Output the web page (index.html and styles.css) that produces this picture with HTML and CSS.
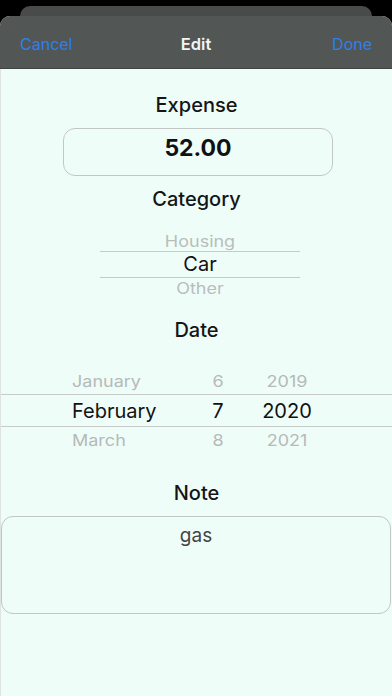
FILE: index.html
```html
<!DOCTYPE html>
<html>
<head>
<meta charset="utf-8">
<link rel="stylesheet" href="styles.css">
</head>
<body>
<div class="screen">
  <div class="back-card"></div>
  <div class="sheet">
    <div class="navbar">
      <span class="nav-btn">Cancel</span>
      <span class="nav-title">Edit</span>
      <span class="nav-btn">Done</span>
    </div>
    <div class="content">
      <div class="label label-expense">Expense</div>
      <div class="amount-box">52.00</div>
      <div class="label label-category">Category</div>
      <div class="cat-picker">
        <div class="row faded">Housing</div>
        <div class="row selected">Car</div>
        <div class="row faded">Other</div>
      </div>
      <div class="label label-date">Date</div>
      <div class="date-picker">
        <div class="drow faded"><span>January</span><span>6</span><span>2019</span></div>
        <div class="drow selected"><span>February</span><span>7</span><span>2020</span></div>
        <div class="drow faded"><span>March</span><span>8</span><span>2021</span></div>
      </div>
      <div class="label label-note">Note</div>
      <div class="note-box">gas</div>
    </div>
  </div>
</div>
</body>
</html>
```
FILE: styles.css
```css
html, body {
  margin: 0;
  padding: 0;
  background: #000;
}
body {
  font-family: Inter, "Noto Sans", "Liberation Sans", sans-serif;
}
.screen {
  width: 392px;
  height: 696px;
  overflow: hidden;
  display: flex;
  flex-direction: column;
}
.back-card {
  height: 10px;
  margin: 6px 20px 0;
  background: #484b4a;
  border-radius: 10px 10px 0 0;
  flex: none;
}
.sheet {
  flex: 1;
  display: flex;
  flex-direction: column;
  border-radius: 10px 10px 0 0;
  overflow: hidden;
  background: #effdf8;
}
.navbar {
  height: 53px;
  flex: none;
  background: #525755;
  border-bottom: 1px solid #3f4342;
  display: flex;
  align-items: center;
  justify-content: space-between;
  padding: 3px 20px 0 20px;
  box-sizing: border-box;
  position: relative;
}
.nav-btn {
  color: #2d7fee;
  font-size: 16px;
}
.nav-title {
  position: absolute;
  left: 0;
  right: 0;
  text-align: center;
  color: #f4f4f4;
  font-size: 16.5px;
  font-weight: 600;
  pointer-events: none;
}
.content {
  flex: 1;
  display: flex;
  flex-direction: column;
  border-left: 1px solid #dfe4e2;
}
.label {
  text-align: center;
  font-size: 20px;
  line-height: 24px;
  color: #151515;
  font-weight: 500;
}
.label-expense { margin-top: 24px; }
.amount-box {
  margin: 11px 0 0 62px;
  width: 270px;
  height: 48px;
  box-sizing: border-box;
  border: 1px solid #c2c6c4;
  border-radius: 12px;
  text-align: center;
  font-size: 23px;
  font-weight: 700;
  line-height: 30px;
  padding-top: 4px;
  color: #111;
}
.label-category { margin-top: 11px; }
.cat-picker {
  margin: 18px 0 0 99px;
  width: 200px;
  display: flex;
  flex-direction: column;
}
.cat-picker .row {
  text-align: center;
}
.cat-picker .faded {
  height: 22px;
  line-height: 26px;
  font-size: 18px;
  color: #b8bdbb;
  transform: scaleY(0.85);
}
.cat-picker .faded:last-child {
  line-height: 22px;
}
.cat-picker .selected {
  height: 27px;
  line-height: 25px;
  font-size: 20px;
  color: #111;
  border-top: 1.5px solid #c6cbc9;
  border-bottom: 1.5px solid #c6cbc9;
  box-sizing: border-box;
}
.label-date { margin-top: 18px; }
.date-picker {
  margin-top: 26px;
  display: flex;
  flex-direction: column;
}
.drow {
  display: grid;
  grid-template-columns: 120px 52px 86px;
  padding-left: 71px;
  align-items: center;
}
.drow span:nth-child(2),
.drow span:nth-child(3) {
  text-align: center;
}
.drow.faded {
  height: 26px;
  font-size: 18px;
  color: #b5bab8;
}
.drow.faded span {
  transform: scaleY(0.88);
}
.drow.selected {
  height: 33px;
  font-size: 20px;
  color: #111;
  border-top: 1.5px solid #c6cbc9;
  border-bottom: 1.5px solid #c6cbc9;
  box-sizing: border-box;
}
.label-note { margin-top: 28px; }
.note-box {
  margin: 11px 0 0 0;
  width: 390px;
  height: 98px;
  box-sizing: border-box;
  border: 1px solid #c2c6c4;
  border-radius: 12px;
  text-align: center;
  font-size: 19px;
  line-height: 24px;
  padding-top: 7px;
  color: #444;
}
```
